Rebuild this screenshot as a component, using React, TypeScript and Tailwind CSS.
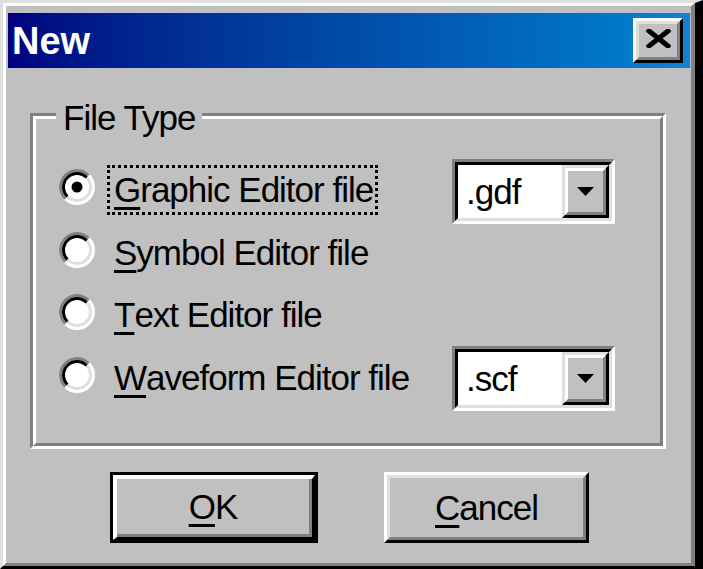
import React from "react";

const uiFont = "font-['Liberation_Sans',Arial,sans-serif] text-[35px] tracking-[-1px] text-black";

const Radio = ({ checked }: { checked?: boolean }) => (
  <svg width="36" height="36" viewBox="0 0 36 36" className="shrink-0">
    <circle cx="18" cy="18" r="18" fill="#ffffff" />
    <path d="M5.27 30.73 A18 18 0 0 1 30.73 5.27 Z" fill="#808080" />
    <circle cx="18" cy="18" r="15" fill="#dfdfdf" />
    <path d="M7.39 28.61 A15 15 0 0 1 28.61 7.39 Z" fill="#000000" />
    <circle cx="18" cy="18" r="12" fill="#ffffff" />
    {checked && <circle cx="18" cy="18" r="5.5" fill="#000000" />}
  </svg>
);

const Ul = ({ children }: { children: React.ReactNode }) => (
  <span className="underline decoration-[3px] underline-offset-[5px]">{children}</span>
);

const Combo = ({ value }: { value: string }) => (
  <div className="ml-auto mt-[8px] w-[163px] h-[65px] shrink-0 border-[3px] border-t-[#808080] border-l-[#808080] border-r-white border-b-white">
    <div className="h-full flex border-[3px] border-t-black border-l-black border-r-[#dfdfdf] border-b-[#dfdfdf] bg-white">
      <span className="flex-1 flex items-center pl-[8px] leading-none">{value}</span>
      <div className="w-[47px] h-full border-[3px] border-t-[#dfdfdf] border-l-[#dfdfdf] border-r-black border-b-black">
        <div className="h-full flex items-center justify-center bg-[#c0c0c0] border-[3px] border-t-white border-l-white border-r-[#808080] border-b-[#808080]">
          <svg width="17" height="9" viewBox="0 0 17 9">
            <polygon points="0,0 17,0 8.5,9" fill="#000000" />
          </svg>
        </div>
      </div>
    </div>
  </div>
);

const Option = ({
  checked,
  focused,
  children,
  combo,
}: {
  checked?: boolean;
  focused?: boolean;
  children: React.ReactNode;
  combo?: string;
}) => (
  <div className="flex items-center h-[62.5px] pl-[23px] pr-[45px]">
    <Radio checked={checked} />
    <div
      className={
        "ml-[12px] mt-[5px] h-[50px] flex items-center pl-[4px] pr-[2px] border-[3px] leading-none whitespace-nowrap " +
        (focused ? "border-dotted border-black" : "border-transparent")
      }
    >
      {children}
    </div>
    {combo && <Combo value={combo} />}
  </div>
);

const App = () => {
  return (
    <div className={"w-[703px] h-[569px] " + uiFont}>
      <div className="w-full h-full border-t-[3px] border-l-[3px] border-r-[8px] border-b-[3px] border-t-[#dfdfdf] border-l-[#dfdfdf] border-r-black border-b-black">
        <div className="h-full flex flex-col bg-[#c0c0c0] pt-[7px] pl-[2px] pr-[1px] border-t-[3px] border-l-[3px] border-r-[4px] border-b-[3px] border-t-white border-l-white border-r-[#808080] border-b-[#808080]">
          {/* title bar */}
          <div className="h-[55px] shrink-0 flex items-center justify-between pl-[4px] pr-[7px] bg-linear-to-r from-[#000080] to-[#1084d0]">
            <span className="font-['Liberation_Sans',Arial,sans-serif] font-bold text-[38px] tracking-normal text-white leading-none">
              New
            </span>
            <button className="w-[50px] h-[45px] border-[3px] border-t-white border-l-white border-r-black border-b-black">
              <div className="h-full flex items-center justify-center pb-[5px] bg-[#c0c0c0] border-[3px] border-t-[#dfdfdf] border-l-[#dfdfdf] border-r-[#808080] border-b-[#808080]">
                <svg width="25" height="19" viewBox="0 0 25 19">
                  <path d="M3 2 L22 17 M22 2 L3 17" stroke="#000000" strokeWidth="5" strokeLinecap="square" />
                </svg>
              </div>
            </button>
          </div>

          {/* group box */}
          <div className="relative ml-[22px] mt-[45px] w-[636px] h-[336px] shrink-0 border-[3px] border-t-[#808080] border-l-[#808080] border-r-white border-b-white">
            <span className="absolute left-[23px] -top-[15px] px-[7px] leading-[34px] bg-[#c0c0c0] whitespace-nowrap">
              File Type
            </span>
            <div className="h-full flex flex-col pt-[37px] border-[3px] border-t-white border-l-white border-r-[#808080] border-b-[#808080]">
              <Option checked focused combo=".gdf">
                <Ul>G</Ul>raphic Editor file
              </Option>
              <Option>
                <Ul>S</Ul>ymbol Editor file
              </Option>
              <Option>
                <Ul>T</Ul>ext Editor file
              </Option>
              <Option combo=".scf">
                <Ul>W</Ul>aveform Editor file
              </Option>
            </div>
          </div>

          {/* buttons */}
          <div className="flex mt-[23px] pl-[102px] gap-[66px]">
            <button className="w-[208px] h-[71px] border-[3px] border-black">
              <div className="h-full border-t-[4px] border-l-[4px] border-r-[3px] border-b-[3px] border-t-white border-l-white border-r-black border-b-black">
                <div className="h-full flex items-center justify-center leading-none bg-[#c0c0c0] border-r-[3px] border-b-[3px] border-r-[#808080] border-b-[#808080]">
                  <span>
                    <Ul>O</Ul>K
                  </span>
                </div>
              </div>
            </button>
            <button className="w-[205px] h-[71px] border-[3px] border-t-white border-l-white border-r-black border-b-black">
              <div className="h-full flex items-center justify-center leading-none bg-[#c0c0c0] border-[3px] border-t-[#dfdfdf] border-l-[#dfdfdf] border-r-[#808080] border-b-[#808080]">
                <span>
                  <Ul>C</Ul>ancel
                </span>
              </div>
            </button>
          </div>
        </div>
      </div>
    </div>
  );
};

export default App;
